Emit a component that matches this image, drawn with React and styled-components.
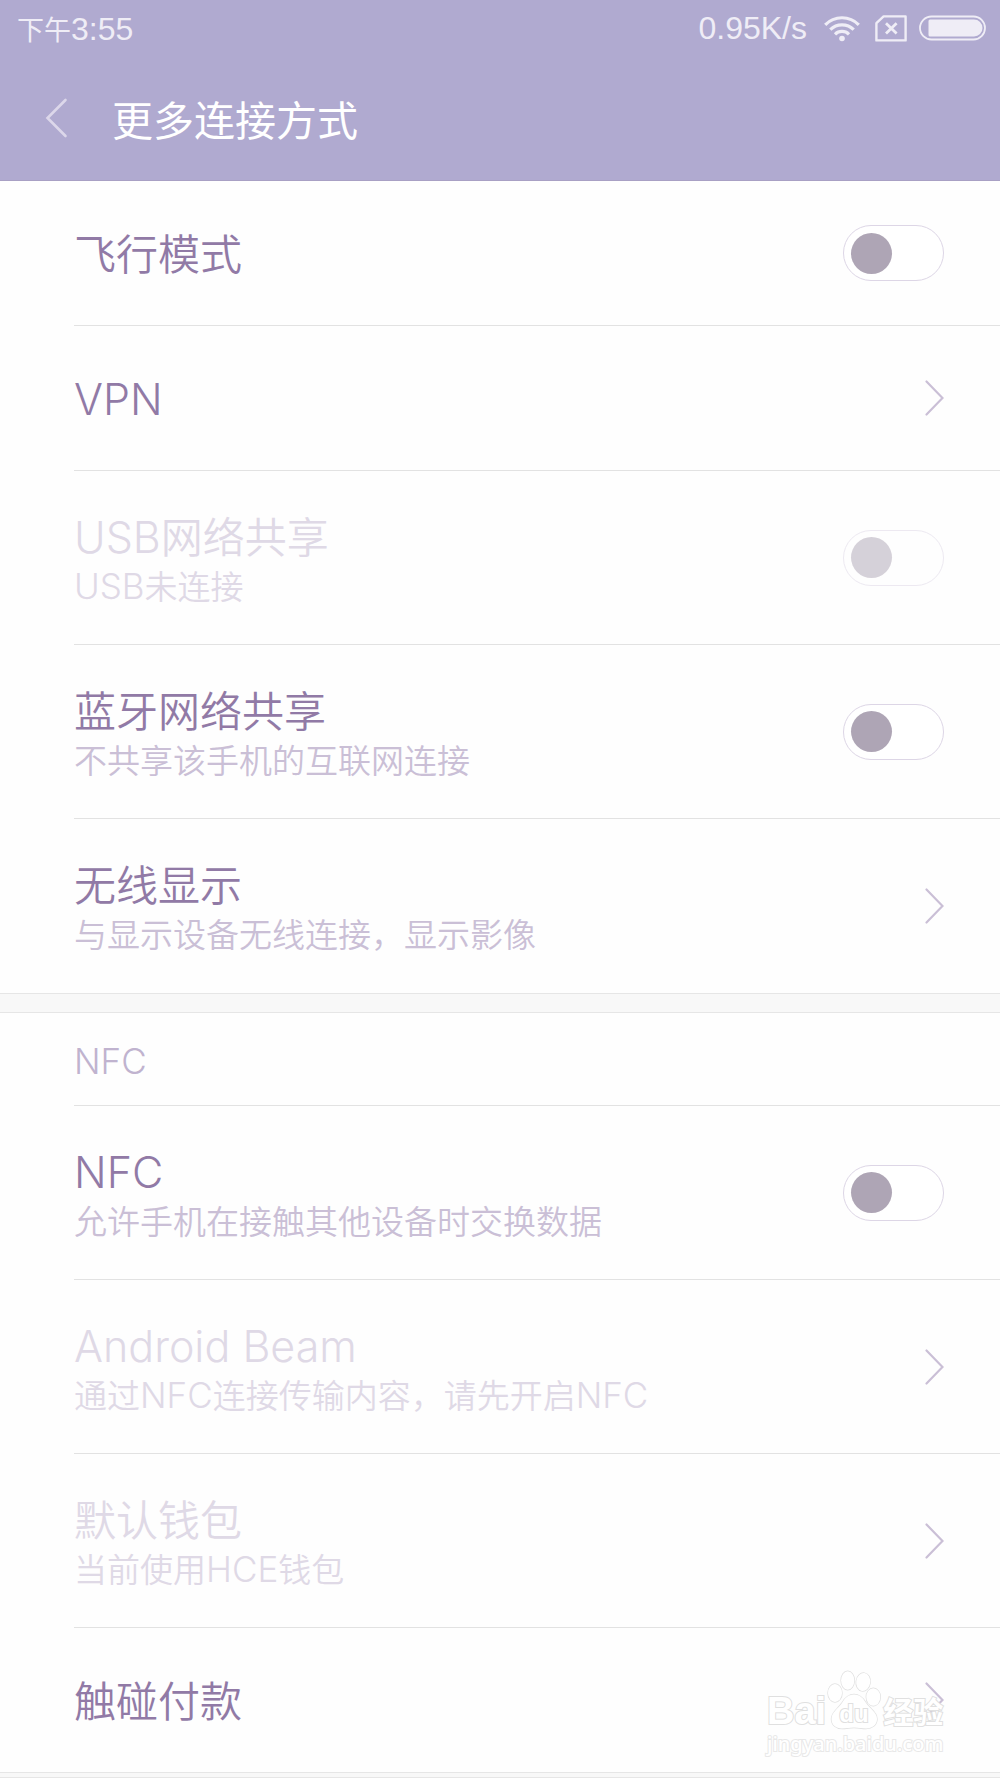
import React, { useState } from "react";
import styled, { createGlobalStyle, css } from "styled-components";

const GlobalStyle = createGlobalStyle`
  *, *::before, *::after { box-sizing: border-box; }
  html { background: #f8f8f8; }
  body {
    margin: 0;
    font-family: "Noto Sans CJK SC", sans-serif;
    font-weight: 350;
  }
`;

const Screen = styled.div`
  position: relative;
  overflow: hidden;
`;

const Header = styled.header`
  background: #b0aad0;
  border-bottom: 1px solid #a8a0c4;
  color: #fff;
`;

const StatusBar = styled.div`
  display: flex;
  align-items: center;
  justify-content: space-between;
  height: 56px;
  padding: 0 14px 0 17px;
  color: #efedf6;
  font-size: 27px;
  font-weight: 400;
`;

const StatusText = styled.span`
  font-family: "Liberation Sans", sans-serif;
  font-size: 32px;
  line-height: 1;
`;

const StatusIcons = styled.div`
  display: flex;
  align-items: center;
  gap: 12px;
`;

const Latin = styled.span`
  font-family: Inter, sans-serif;
  font-size: ${(p) => p.$size}px;
  font-weight: 300;
  line-height: 1;
`;

const TitleBar = styled.div`
  display: flex;
  align-items: center;
  gap: 44px;
  height: 124px;
  padding: 0 44px;
`;

const BackButton = styled.button`
  display: flex;
  padding: 0;
  border: 0;
  background: none;
  color: #dcd7ea;
`;

const PageTitle = styled.h1`
  margin: 0;
  font-size: 41px;
  line-height: 50px;
  font-weight: 400;
`;

const Group = styled.section`
  background: #fefefe;
  padding-left: 74px;
`;

const Gap = styled.div`
  height: ${(p) => p.$size}px;
  background: #f8f8f8;
  border: solid #e6e6e6;
  border-width: 1px 0;
`;

const GroupLabel = styled.h2`
  display: flex;
  align-items: center;
  height: 93px;
  margin: 0;
  padding-top: 4px;
  border-bottom: 1px solid #e2e2e2;
  color: #c0b3cf;
  font-weight: 350;
`;

const rowLayout = css`
  display: flex;
  align-items: center;
  justify-content: space-between;
  width: 100%;
  height: ${(p) => (p.$tall ? 174 : 145)}px;
  padding: 0 56px 0 0;
  border: 0;
  border-bottom: 1px solid #e2e2e2;
  background: none;
  font: inherit;
  text-align: left;

  &:last-child {
    height: ${(p) => (p.$tall ? 174 : 144)}px;
    border-bottom: 0;
  }
`;

const SwitchRow = styled.div`
  ${rowLayout}
`;

const LinkRow = styled.button`
  ${rowLayout}
`;

const Texts = styled.span`
  display: flex;
  flex-direction: column;
  padding: ${(p) => (p.$tall ? "4px 0 0" : "0 0 2px")};
`;

const Title = styled.span`
  font-size: 42px;
  line-height: 50px;
  color: ${(p) => (p.$off ? "#dfd9e6" : "#917aa6")};
`;

const Summary = styled.span`
  font-size: 33px;
  line-height: 50px;
  color: ${(p) => (p.$off ? "#dfd9e6" : "#cabfd6")};
`;

const Toggle = styled.input`
  appearance: none;
  display: flex;
  align-items: center;
  flex: none;
  width: 101px;
  height: 56px;
  margin: 0;
  padding: 0 7px;
  border: 1px solid #ddd6e6;
  border-radius: 28px;
  background: #fff;

  &::before {
    content: "";
    width: 41px;
    height: 41px;
    border-radius: 50%;
    background: #aea5b5;
  }

  &:checked {
    justify-content: flex-end;
  }

  &:disabled {
    opacity: 0.5;
  }
`;

const Watermark = styled.div`
  position: absolute;
  right: 54px;
  bottom: 20px;
  width: 179px;
  color: #fff;
  font-family: "Liberation Sans", "Noto Sans CJK SC", sans-serif;
  font-weight: 700;
  -webkit-text-stroke: 2px #e0e0e0;
  paint-order: stroke fill;
`;

const Brand = styled.div`
  display: flex;
  align-items: flex-end;
  height: 60px;
  font-size: 38px;
  line-height: 38px;
`;

const BrandCjk = styled.span`
  font-size: 30px;
  line-height: 34px;
`;

const Site = styled.div`
  font-family: "Noto Sans", sans-serif;
  font-size: 20px;
  line-height: 28px;
  font-weight: 500;
  -webkit-text-stroke-color: #e8e8e8;
`;

function Mixed({ text, latin }) {
  return text
    .split(/([\x20-\x7e]+)/)
    .filter(Boolean)
    .map((part, i) =>
      /^[\x20-\x7e]/.test(part) ? (
        <Latin key={i} $size={latin}>{part}</Latin>
      ) : (
        part
      )
    );
}

function Chevron() {
  return (
    <svg width="19" height="36" viewBox="0 0 19 36" fill="none" stroke="#cabfd6" strokeWidth="2.2" strokeLinecap="round" aria-hidden="true">
      <path d="M1.5 1.5 17.5 18 1.5 34.5" />
    </svg>
  );
}

function WifiIcon() {
  return (
    <svg width="44" height="27" viewBox="-5 0 44 27" fill="none" stroke="#efedf6" strokeWidth="3.2" aria-hidden="true">
      <path d="M1.2 9.8a23.5 23.5 0 0 1 33.6 0" />
      <path d="M6.3 14.7a16.5 16.5 0 0 1 23.4 0" />
      <path d="M11 19.3a10 10 0 0 1 14 0" />
      <circle cx="18" cy="23.5" r="2.8" fill="#efedf6" stroke="none" />
    </svg>
  );
}

function NoSimIcon() {
  return (
    <svg width="32" height="27" viewBox="0 0 32 27" fill="none" stroke="#efedf6" strokeWidth="2.4" aria-hidden="true">
      <path d="M8.6 1.4H30.6V25.4H1.4V8.2Z" strokeLinejoin="round" />
      <path d="M11 8.2 21.6 18.4M21.6 8.2 11 18.4" strokeWidth="2.8" />
    </svg>
  );
}

function BatteryIcon() {
  return (
    <svg width="67" height="26" viewBox="0 0 67 26" aria-hidden="true">
      <rect x="1" y="1.5" width="65" height="23" rx="11.5" fill="none" stroke="#efedf6" strokeWidth="1.8" />
      <path d="M11 4.5H55a8.5 8.5 0 0 1 0 17H11a1.5 1.5 0 0 1-1.5-1.5V6a1.5 1.5 0 0 1 1.5-1.5Z" fill="#efedf6" />
    </svg>
  );
}

function Paw() {
  return (
    <svg width="57" height="60" viewBox="0 0 57 60" fill="#fff" stroke="#e0e0e0" strokeWidth="1.4" aria-hidden="true">
      <ellipse cx="9" cy="23" rx="7" ry="9" />
      <ellipse cx="21.7" cy="10.5" rx="6.6" ry="9.3" />
      <ellipse cx="37.2" cy="12" rx="7" ry="9" transform="rotate(8 37.2 12)" />
      <ellipse cx="47.3" cy="27" rx="7" ry="8.7" />
      <path d="M28 24.500C34 24.500 37 28 40 33C44 39 51 42 51 49C51 55 46 58.500 40 58.500C35 58.500 33 57.500 28 57.500C23 57.500 21 58.500 16 58.500C10 58.500 5.500 55 5.500 49C5.500 42 12 39 16 33C19 28 22 24.500 28 24.500Z" />
      <text x="28" y="52" textAnchor="middle" fontSize="24" strokeWidth="2" paintOrder="stroke">du</text>
    </svg>
  );
}

function RowTexts({ id, title, summary, off }) {
  return (
    <Texts $tall={Boolean(summary)}>
      <Title as={id ? "label" : "span"} htmlFor={id} $off={off}>
        <Mixed text={title} latin={43} />
      </Title>
      {summary && (
        <Summary $off={off}>
          <Mixed text={summary} latin={35} />
        </Summary>
      )}
    </Texts>
  );
}

function ToggleItem({ id, title, summary, off }) {
  const [on, setOn] = useState(false);
  return (
    <SwitchRow $tall={Boolean(summary)}>
      <RowTexts id={id} title={title} summary={summary} off={off} />
      <Toggle
        id={id}
        type="checkbox"
        role="switch"
        checked={on}
        disabled={off}
        onChange={(e) => setOn(e.target.checked)}
      />
    </SwitchRow>
  );
}

function LinkItem({ title, summary, off }) {
  return (
    <LinkRow type="button" disabled={off} $tall={Boolean(summary)}>
      <RowTexts title={title} summary={summary} off={off} />
      <Chevron />
    </LinkRow>
  );
}

export default function App() {
  return (
    <Screen>
      <GlobalStyle />
      <Header>
        <StatusBar>
          <span>下午<StatusText>3:55</StatusText></span>
          <StatusIcons>
            <StatusText>0.95K/s</StatusText>
            <WifiIcon />
            <NoSimIcon />
            <BatteryIcon />
          </StatusIcons>
        </StatusBar>
        <TitleBar>
          <BackButton type="button" aria-label="返回">
            <svg width="24" height="40" viewBox="0 0 24 40" fill="none" stroke="currentColor" strokeWidth="2.6" strokeLinecap="round" aria-hidden="true">
              <path d="M21.5 2 3.5 20 21.5 38" />
            </svg>
          </BackButton>
          <PageTitle>更多连接方式</PageTitle>
        </TitleBar>
      </Header>
      <main>
        <Group>
          <ToggleItem id="airplane" title="飞行模式" />
          <LinkItem title="VPN" />
          <ToggleItem id="usb" title="USB网络共享" summary="USB未连接" off />
          <ToggleItem id="bluetooth" title="蓝牙网络共享" summary="不共享该手机的互联网连接" />
          <LinkItem title="无线显示" summary="与显示设备无线连接，显示影像" />
        </Group>
        <Gap $size={20} />
        <Group>
          <GroupLabel><Latin $size={35}>NFC</Latin></GroupLabel>
          <ToggleItem id="nfc" title="NFC" summary="允许手机在接触其他设备时交换数据" />
          <LinkItem title="Android Beam" summary="通过NFC连接传输内容，请先开启NFC" off />
          <LinkItem title="默认钱包" summary="当前使用HCE钱包" off />
          <LinkItem title="触碰付款" />
        </Group>
        <Gap $size={6} />
      </main>
      <Watermark>
        <Brand>
          <span>Bai</span>
          <Paw />
          <BrandCjk>经验</BrandCjk>
        </Brand>
        <Site>jingyan.baidu.com</Site>
      </Watermark>
    </Screen>
  );
}
